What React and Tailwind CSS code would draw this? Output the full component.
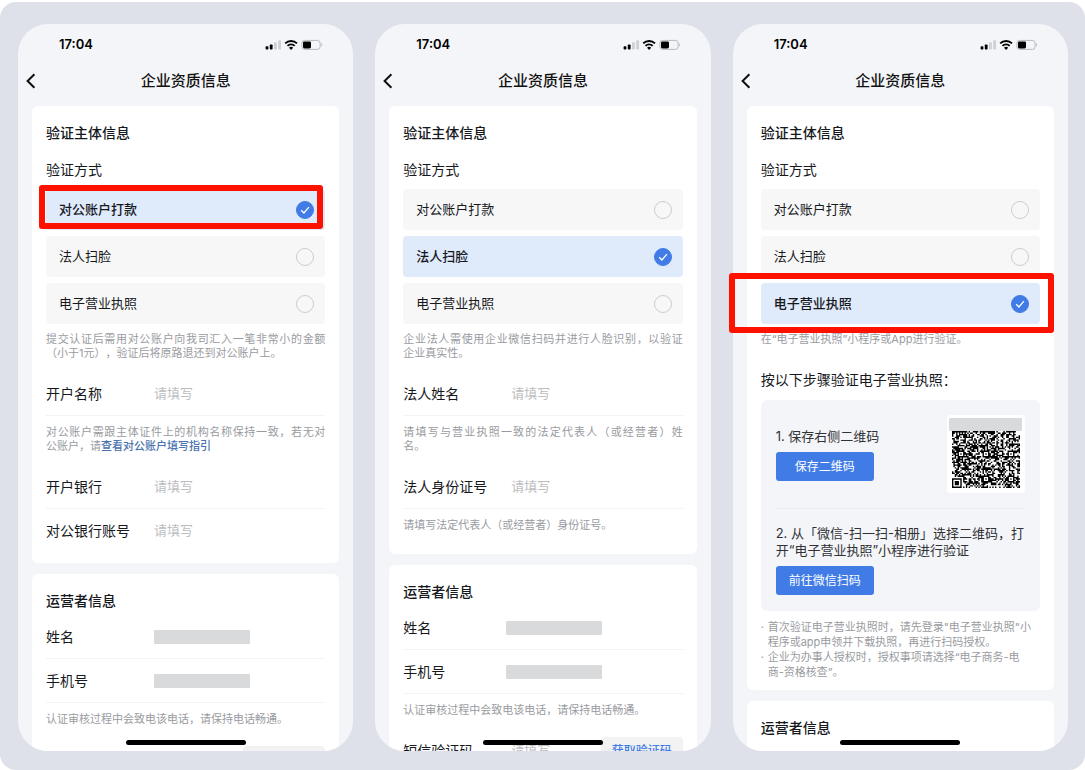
import React, { useId, useState } from "react";

const METHODS = [
  { value: "transfer", label: "对公账户打款" },
  { value: "face", label: "法人扫脸" },
  { value: "license", label: "电子营业执照" },
];

// --- QR code (version 8 grid: finder, timing and alignment patterns) ---
const QR_SIZE = 49;
const ALIGN = [6, 24, 42];

const ring = (dx, dy, radius) => {
  const d = Math.max(Math.abs(dx), Math.abs(dy));
  return radius === 3 ? d !== 2 && d <= 3 : d !== 1;
};

const buildQrPath = () => {
  let seed = 20240517;
  let path = "";
  const finders = [
    [3, 3],
    [QR_SIZE - 4, 3],
    [3, QR_SIZE - 4],
  ];
  for (let y = 0; y < QR_SIZE; y++) {
    for (let x = 0; x < QR_SIZE; x++) {
      seed = (seed * 1664525 + 1013904223) % 4294967296;
      let dark = seed / 4294967296 < 0.54;
      if (x === 6 || y === 6) dark = (x + y) % 2 === 0;
      ALIGN.forEach((cx) =>
        ALIGN.forEach((cy) => {
          if (Math.abs(x - cx) <= 2 && Math.abs(y - cy) <= 2) {
            dark = ring(x - cx, y - cy, 2);
          }
        })
      );
      finders.forEach(([cx, cy]) => {
        if (Math.abs(x - cx) <= 4 && Math.abs(y - cy) <= 4) {
          dark = ring(x - cx, y - cy, 3);
        }
      });
      if (dark) path += `M${x} ${y}h1v1h-1z`;
    }
  }
  return path;
};

const QR_PATH = buildQrPath();

const QrCode = () => (
  <div className="relative shrink-0 rounded bg-white p-[5px]">
    <svg width="68" height="68" viewBox="0 0 49 49" role="img" aria-label="二维码">
      <path d={QR_PATH} fill="#000" />
    </svg>
    <div className="absolute top-[3px] right-[3px] left-[2px] h-[13px] rounded-[1px] bg-[#d9dadc]" />
  </div>
);

const StatusIcons = () => (
  <svg width="58" height="12" viewBox="0 0 58 12" aria-hidden="true">
    <rect x="0.6" y="7.2" width="2.8" height="3.3" rx="0.8" fill="#000" />
    <rect x="4.8" y="5.4" width="2.8" height="5.1" rx="0.8" fill="#000" />
    <rect x="9" y="3.2" width="2.8" height="7.3" rx="0.8" fill="#cfd0d3" />
    <rect x="13.2" y="1.2" width="2.8" height="9.3" rx="0.8" fill="#cfd0d3" />
    <g fill="none" stroke="#000" strokeWidth="1.9">
      <path d="M20.2 4.4a8.4 8.4 0 0 1 11.8 0" />
      <path d="M22.5 6.9a5.2 5.2 0 0 1 7.2 0" />
    </g>
    <path d="M24 8.7a3.2 3.2 0 0 1 4.2 0L26.1 11z" fill="#000" />
    <rect x="36.9" y="1.4" width="18.2" height="9" rx="2.6" fill="none" stroke="#b9babd" />
    <rect x="38" y="2.4" width="8" height="7" rx="1.4" fill="#000" />
    <path d="M56.2 4.3c1.4.4 1.4 2.8 0 3.2z" fill="#b9babd" />
  </svg>
);

const Card = ({ children }) => (
  <section className="shrink-0 rounded-md bg-white px-3.5 pt-[17px] pb-2.5">{children}</section>
);

const SectionTitle = ({ children }) => (
  <h2 className="text-sm leading-5 font-medium text-[#16181c]">{children}</h2>
);

// All lines but the last are spread over the full width of the card
const Hint = ({ lines, className = "mt-[9px]" }) => (
  <p
    className={`mb-3 text-[11px] leading-[14px] text-[#999b9f] [text-spacing-trim:space-all] ${className}`}
  >
    {lines.map((line, i) => (
      <span
        key={i}
        className={
          i < lines.length - 1
            ? "block whitespace-nowrap [text-align-last:justify]"
            : "block whitespace-nowrap"
        }
      >
        {line}
      </span>
    ))}
  </p>
);

const Field = ({ label, last, children }) => {
  const id = useId();
  return (
    <div className={`flex h-11 items-center ${last ? "" : "border-b border-[#f3f3f4]"}`}>
      <label htmlFor={id} className="w-[108px] shrink-0 text-sm text-[#16181c]">
        {label}
      </label>
      <input
        id={id}
        type="text"
        placeholder="请填写"
        className="min-w-0 flex-1 bg-transparent text-[13px] text-[#16181c] outline-none placeholder:text-[#bcbdc0]"
      />
      {children}
    </div>
  );
};

const MaskedRow = ({ label, labelWidth }) => (
  <div className="flex h-11 items-center border-b border-[#f3f3f4]">
    <span className={`shrink-0 text-sm text-[#16181c] ${labelWidth}`}>{label}</span>
    <span className="h-3.5 w-24 rounded-[1px] bg-[#d9dadc]" />
  </div>
);

const MethodOption = ({ name, method, checked, onSelect }) => (
  <label
    className={`flex h-[41px] cursor-pointer items-center justify-between rounded pr-[11px] pl-[13px] text-[13px] text-[#16181c] ${
      checked ? "bg-[#dfeafb] font-medium" : "bg-[#f7f7f7]"
    }`}
  >
    {method.label}
    <span className="relative flex size-[18px]">
      <input
        type="radio"
        name={name}
        value={method.value}
        checked={checked}
        onChange={() => onSelect(method.value)}
        className="size-[18px] cursor-pointer appearance-none rounded-full border border-[#cccdcf] checked:border-[#417ce6] checked:bg-[#417ce6]"
      />
      {checked && (
        <svg
          className="pointer-events-none absolute inset-0"
          width="18"
          height="18"
          viewBox="0 0 18 18"
          fill="none"
          stroke="#fff"
          strokeWidth="1.3"
        >
          <path d="M5.2 9.3l2.7 2.7 5-5.8" />
        </svg>
      )}
    </span>
  </label>
);

const TransferForm = () => (
  <>
    <Hint
      className="mt-2"
      lines={[
        "提交认证后需用对公账户向我司汇入一笔非常小的金额",
        "（小于1元），验证后将原路退还到对公账户上。",
      ]}
    />
    <Field label="开户名称" />
    <Hint
      lines={[
        "对公账户需跟主体证件上的机构名称保持一致，若无对",
        <>
          公账户，请
          <a href="#guide" className="font-medium text-[#4a72ae]">
            查看对公账户填写指引
          </a>
        </>,
      ]}
    />
    <Field label="开户银行" />
    <Field label="对公银行账号" last />
  </>
);

const FaceForm = () => (
  <>
    <Hint
      className="mt-2"
      lines={["企业法人需使用企业微信扫码并进行人脸识别，以验证", "企业真实性。"]}
    />
    <Field label="法人姓名" />
    <Hint lines={["请填写与营业执照一致的法定代表人（或经营者）姓", "名。"]} />
    <Field label="法人身份证号" />
    <Hint lines={["请填写法定代表人（或经营者）身份证号。"]} />
  </>
);

const StepButton = ({ children }) => (
  <button
    type="button"
    className="mt-[7px] block h-[29px] w-[98px] rounded-[3px] bg-[#417ce6] text-xs text-white"
  >
    {children}
  </button>
);

const LicenseForm = () => (
  <>
    <Hint className="mt-2" lines={["在“电子营业执照”小程序或App进行验证。"]} />
    <p className="mt-6 text-sm leading-5 text-[#16181c]">按以下步骤验证电子营业执照：</p>
    <div className="mt-2.5 rounded-md bg-[#f4f5f8] px-[15px] pt-[15px] pb-4 text-[13px] text-[#303236]">
      <div className="flex items-center justify-between border-b border-[#ecedf0] pb-[15px]">
        <div>
          <p className="leading-[18px]">1. 保存右侧二维码</p>
          <StepButton>保存二维码</StepButton>
        </div>
        <QrCode />
      </div>
      <p className="pt-4 leading-[17px]">
        2. 从「微信-扫一扫-相册」选择二维码，打
        <br />
        开“电子营业执照”小程序进行验证
      </p>
      <StepButton>前往微信扫码</StepButton>
    </div>
    <ul className="mt-[9px] text-[11px] leading-[15px] whitespace-nowrap text-[#999b9f] [text-spacing-trim:space-all]">
      <li className="flex">
        <span className="w-[7px] shrink-0">·</span>
        <span>
          首次验证电子营业执照时，请先登录"电子营业执照"小
          <br />
          程序或app申领并下载执照，再进行扫码授权。
        </span>
      </li>
      <li className="flex">
        <span className="w-[7px] shrink-0">·</span>
        <span>
          企业为办事人授权时，授权事项请选择“电子商务-电
          <br />
          商-资格核查”。
        </span>
      </li>
    </ul>
  </>
);

const FORMS = {
  transfer: TransferForm,
  face: FaceForm,
  license: LicenseForm,
};

const Phone = ({ initialMethod, maskedLabelWidth, highlight }) => {
  const name = useId();
  const [method, setMethod] = useState(initialMethod);
  const Form = FORMS[method];

  return (
    <div className="relative flex min-w-0 flex-1">
      <div className="relative flex min-w-0 flex-1 flex-col overflow-hidden rounded-[30px] bg-[#f4f5f8]">
        {/* Status bar */}
        <div className="flex h-[41px] shrink-0 items-center justify-between pr-[30px] pl-[41px]">
          <span className="text-[13px] font-semibold text-black">17:04</span>
          <StatusIcons />
        </div>

        {/* Title bar */}
        <header className="grid h-8 shrink-0 grid-cols-[32px_1fr_32px] items-center">
          <button type="button" aria-label="返回" className="pl-2">
            <svg width="10" height="16" viewBox="0 0 10 16" fill="none" stroke="#111" strokeWidth="2">
              <path d="M8.4 1.2L1.6 8l6.8 6.8" />
            </svg>
          </button>
          <h1 className="text-center text-[15px] font-medium text-[#111]">企业资质信息</h1>
        </header>

        <main className="mt-[9px] flex min-h-0 flex-1 flex-col gap-[11px] overflow-hidden px-3.5">
          <Card>
            <SectionTitle>验证主体信息</SectionTitle>
            <p className="mt-[17px] mb-[9px] text-sm leading-5 text-[#16181c]">验证方式</p>
            <div className="flex flex-col gap-1.5">
              {METHODS.map((m) => (
                <MethodOption
                  key={m.value}
                  name={name}
                  method={m}
                  checked={m.value === method}
                  onSelect={setMethod}
                />
              ))}
            </div>
            <Form />
          </Card>

          <Card>
            <SectionTitle>运营者信息</SectionTitle>
            <div className="mt-1">
              <MaskedRow label="姓名" labelWidth={maskedLabelWidth} />
              <MaskedRow label="手机号" labelWidth={maskedLabelWidth} />
              <Hint lines={["认证审核过程中会致电该电话，请保持电话畅通。"]} />
              <Field label="短信验证码" last>
                <button
                  type="button"
                  className="h-7 w-[82px] shrink-0 rounded bg-[#f2f2f3] text-xs font-medium text-[#417ce6]"
                >
                  获取验证码
                </button>
              </Field>
            </div>
          </Card>
        </main>

        {/* Home indicator */}
        <div className="absolute inset-x-0 bottom-1.5 mx-auto h-[5px] w-[120px] rounded-full bg-black" />
      </div>

      {highlight && (
        <div
          className={`pointer-events-none absolute rounded-[3px] border-6 border-[#ff1100] ${highlight}`}
        />
      )}
    </div>
  );
};

const App = () => {
  return (
    <div className="h-screen bg-white pt-0.5 font-['Inter','Noto_Sans_CJK_SC',sans-serif]">
      <div className="flex h-full gap-[22px] rounded-2xl bg-[#dee1e9] pt-[22px] pr-[17px] pb-[19px] pl-[18px]">
        <Phone
          initialMethod="transfer"
          maskedLabelWidth="w-[108px]"
          highlight="top-[161px] right-[30px] left-[21px] h-11"
        />
        <Phone initialMethod="face" maskedLabelWidth="w-[103px]" />
        <Phone
          initialMethod="license"
          maskedLabelWidth="w-[108px]"
          highlight="top-[249px] right-[14px] left-[-4px] h-[60px]"
        />
      </div>
    </div>
  );
};

export default App;
